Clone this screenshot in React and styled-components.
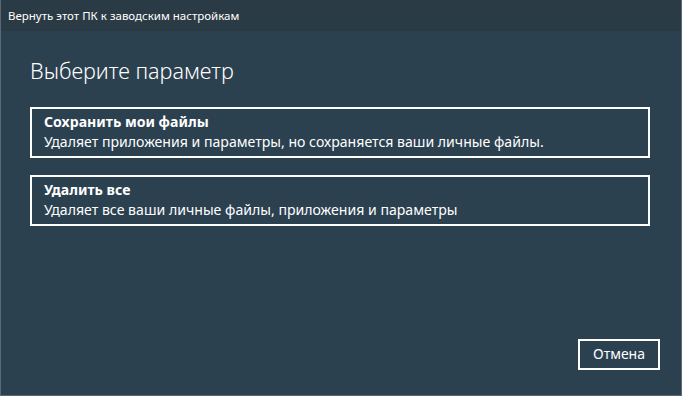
import React from "react";
import styled, { createGlobalStyle } from "styled-components";

const c_title_bar = "#2b3b45";
const c_body = "#2c4150";
const c_frame = "#596a74";
const f_ui = `"Segoe UI", "Noto Sans", "Open Sans", sans-serif`;

const GlobalStyle = createGlobalStyle`
  html, body {
    margin: 0;
    padding: 0;
    background: ${c_body};
  }
`;

const Window = styled.div`
  border-bottom: 1px solid ${c_frame};
  border-left: 1px solid ${c_frame};
  border-right: 1px solid ${c_frame};
  box-sizing: border-box;
  color: white;
  display: flex;
  flex-direction: column;
  font-family: ${f_ui};
  height: 396px;
  width: 682px;
`;

const TitleBar = styled.div`
  align-items: center;
  background-color: ${c_title_bar};
  box-sizing: border-box;
  display: flex;
  font-size: 11.5px;
  height: 31px;
  padding-bottom: 1px;
  padding-left: 7px;
`;

const Body = styled.div`
  background-color: ${c_body};
  display: flex;
  flex: 1;
  flex-direction: column;
  padding: 0 31px 25px 29px;
`;

const Heading = styled.h1`
  font-size: 21.6px;
  font-weight: 300;
  line-height: 30px;
  margin: 25px 0 21px 0;
`;

const Options = styled.div`
  display: flex;
  flex-direction: column;
  gap: 17px;
`;

const Option = styled.button`
  background: transparent;
  border: 2px solid white;
  color: white;
  cursor: pointer;
  display: flex;
  flex-direction: column;
  font-family: ${f_ui};
  height: 51px;
  justify-content: center;
  padding: 0 0 1px 12px;
  text-align: left;
  width: 100%;
`;

const OptionTitle = styled.span`
  font-size: 14.1px;
  font-weight: 700;
  line-height: 20px;
`;

const OptionText = styled.span`
  font-size: 14.1px;
  line-height: 20px;
`;

const Footer = styled.div`
  display: flex;
  justify-content: flex-end;
  margin-right: -10px;
  margin-top: auto;
`;

const Button = styled.button`
  background: transparent;
  border: 2px solid white;
  color: white;
  font-family: ${f_ui};
  font-size: 14px;
  height: 31px;
  padding: 0 0 2px;
  width: 82px;
`;

const options = [
  {
    title: "Сохранить мои файлы",
    text: "Удаляет приложения и параметры, но сохраняется ваши личные файлы."
  },
  {
    title: "Удалить все",
    text: "Удаляет все ваши личные файлы, приложения и параметры"
  }
];

export default () => (
  <>
    <GlobalStyle />
    <Window>
      <TitleBar>Вернуть этот ПК к заводским настройкам</TitleBar>
      <Body>
        <Heading>Выберите параметр</Heading>
        <Options>
          {options.map(o => (
            <Option key={o.title}>
              <OptionTitle>{o.title}</OptionTitle>
              <OptionText>{o.text}</OptionText>
            </Option>
          ))}
        </Options>
        <Footer>
          <Button>Отмена</Button>
        </Footer>
      </Body>
    </Window>
  </>
);
